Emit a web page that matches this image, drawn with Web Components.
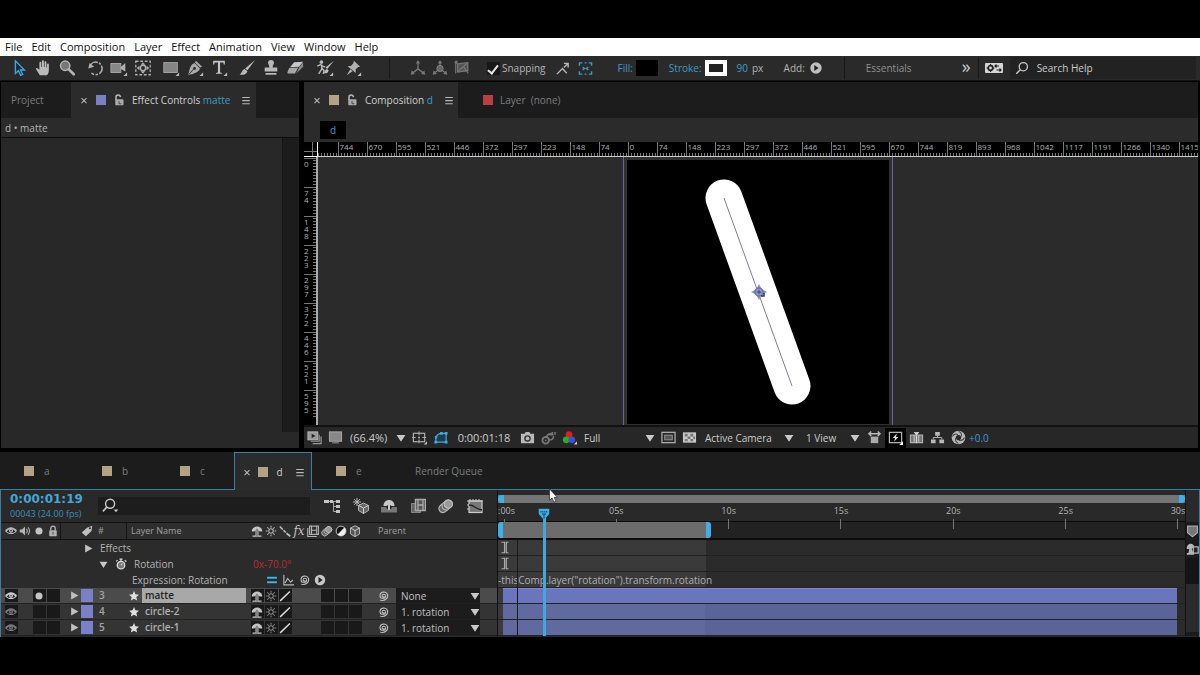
<!DOCTYPE html>
<html lang="en">
<head>
<meta charset="utf-8">
<title>Motion editor</title>
<style>
  html, body { margin: 0; background: #000; }
  body { font: 10px/16px "Open Sans", "Noto Sans", sans-serif; color: #b4b4b4; }
</style>
</head>
<body>
<editor-app></editor-app>
<script>
const define = (name, markup, setup) => {
  const tpl = document.createElement('template');
  tpl.innerHTML = `<style>*,:host{box-sizing:border-box}:host{display:block}
    button{font:inherit;color:inherit;background:none;border:0;padding:0;margin:0;display:inline-flex;align-items:center}
    a{color:inherit;text-decoration:none}</style>` + markup;
  customElements.define(name, class extends HTMLElement {
    constructor() {
      super();
      this.attachShadow({ mode: 'open' }).appendChild(tpl.content.cloneNode(true));
    }
    connectedCallback() {
      if (setup && !this.ready) { this.ready = true; setup(this, this.shadowRoot); }
    }
  });
};

/* ---------- icons ---------- */
const more = '<path d="M19 15v4h-4z" fill="#bbb"/>';
const I = {
  arrow: [20, '<path d="M6 2v14l3.400-3 2.400 5.200 2.300-1-2.400-5H16z" fill="#1b2a33" stroke="#3fa9dd" stroke-width="1.500"/>'],
  hand: [20, '<path d="M6.500 18 3 12.500C1.800 10.500 2 9.500 3.400 10L6 12V4.300c0-1.700 2-1.700 2.100 0V9h.7V2.800c0-1.700 2.200-1.700 2.200 0V9h.7V3.800c0-1.600 2.100-1.600 2.100 0v5.700h.7V6c0-1.500 2-1.400 2 0v7c0 3-2 5-2.500 5z" fill="#bababa"/>'],
  zoom: [20, '<circle cx="8" cy="7.500" r="5.200" fill="#777" stroke="#b5b5b5" stroke-width="1.600"/><path d="m12 11.500 5.500 5.500" stroke="#b5b5b5" stroke-width="3" stroke-linecap="round"/>'],
  rotate: [20, '<path d="M4.500 7.500A7 7 0 1 1 6 15.500" fill="none" stroke="#b0b0b0" stroke-width="1.700" stroke-dasharray="10 1.500 2.500 1.500"/><path d="M2.500 10.500 4 4.500l5 4z" fill="#b0b0b0"/>'],
  camera: [20, '<rect x="1" y="5" width="11" height="10" fill="#888" stroke="#aaa"/><path d="m12 9 5-4.500v9.500L12 11z" fill="#b0b0b0"/>' + more],
  pan: [20, '<rect x="2" y="2.500" width="16" height="15" fill="none" stroke="#b0b0b0" stroke-width="1.400" stroke-dasharray="3 2"/><circle cx="10" cy="10" r="3" fill="none" stroke="#b0b0b0" stroke-width="1.700"/><path d="m10 3.500 2.500 3h-5zm0 13 2.500-3h-5zM3 10l3-2.500v5zm14 0-3-2.500v5z" fill="#b0b0b0"/>'],
  rect: [20, '<rect x="2" y="4" width="15" height="11" fill="#858585" stroke="#a8a8a8"/>' + more],
  pen: [20, '<path d="m11 2 7 6.500-2.500 1-5.500-5.500zM9.500 4.500l6 6c-1 4-6 5.500-13 7.500C4 11 5 6 9.500 4.500z" fill="#aaa"/><path d="m3 17.500 6-7" stroke="#2a2a2a"/><circle cx="9.500" cy="10.500" r="1.500" fill="#2a2a2a"/>' + more],
  type: [20, '<path d="M3.500 2h13v4h-1.200l-.5-2.200h-3.600V15l2.200.5v1h-6.800v-1l2.200-.5V3.800H5.200L4.700 6H3.500z" fill="#c4c4c4"/>' + more],
  brush: [20, '<path d="m19 1-8.500 11.500-2.500-2z" fill="#c0c0c0"/><path d="M7.500 11 10.500 13.500C9 17.500 6 18 1.500 17.200c2.500-.5 3-5.700 6-6.200z" fill="#b8b8b8"/>'],
  stamp: [20, '<path d="M10 1a3.300 3.300 0 0 1 3.300 3.300c0 2-1.500 2.500-1.500 5.200H17v4.500H3V9.500h5.200c0-2.700-1.500-3.200-1.500-5.200A3.300 3.300 0 0 1 10 1zM4 15.500h12v2H4z" fill="#b8b8b8"/>'],
  eraser: [20, '<path d="m9 3.500 10-.5-4.500 5.500-10 .7z" fill="#c8c8c8"/><path d="m3.500 10 10-.5-3.500 6.500H2l-.5-1z" fill="#a5a5a5"/><path d="M14.500 9.500 19 4v4.500L11.500 16z" fill="#8a8a8a"/>'],
  roto: [20, '<circle cx="6" cy="3.500" r="2" fill="#b8b8b8"/><path d="M5.500 6 1.500 8M6 6l.5 5-3.500 5.500M6.500 10l2.500 3-1 3.500M6 7l4 2" stroke="#b8b8b8" stroke-width="1.600" fill="none"/><path d="m20 2-7.500 9-2-1.500zM12 11l2 1.500c-.8 3.500-3 4-6 3 2-.5 2-4 4-4.500z" fill="#c0c0c0"/>' + more],
  pin: [20, '<path d="M11 2 18 8.500l-2.200.3-2.800 2.700v4L4 8l4-.5 2.500-3zM7 11.500l2.500 2L3 18z" fill="#b0b0b0"/>' + more],
  axis1: [20, '<path d="M10 11V3M10 11l-6.500 5M10 11l6.500 5" stroke="#777" stroke-width="1.500"/><path d="m10 1 2.500 4h-5zM2 17.500l1-5 3.500 4.200zm16 0-1-5-3.500 4.200z" fill="#777"/>'],
  axis2: [20, '<path d="M10 8V3M7 13l-4 3M13 13l4 3" stroke="#777" stroke-width="1.500"/><circle cx="10" cy="10.500" r="3.500" fill="#666" stroke="#888"/><path d="m10 1 2.500 4h-5zM2 17.500l1-5 3.500 4.200zm16 0-1-5-3.500 4.200z" fill="#777"/>'],
  axis3: [20, '<path d="M5 5.500 16.500 4v9L5 14.500z" fill="#555" stroke="#777" stroke-width="1.300"/><path d="M5 14 16 4.500M3 2v14M12 9l5 7" stroke="#777" stroke-width="1.300" fill="none"/><path d="m1 4 4-2.500V6z" fill="#777"/>'],
  snap1: [16, '<path d="m2 14 6-6 4.500 5M9.500 7 14 2.500M9.500 2.500H14V7" fill="none" stroke="#b8b8b8" stroke-width="1.500"/>'],
  snap2: [16, '<path d="M1.500 5V2h3M11.500 2h3v3M14.500 11v3h-3M4.500 14h-3v-3M5 6.500 7 8 5 9.500M11 6.500 9 8l2 1.500M7 2h2M7 14h2" fill="none" stroke="#3a9ccb" stroke-width="1.500"/>'],
  play: [16, '<circle cx="8" cy="8" r="6.500" fill="#c0c0c0"/><path d="m6 4.500 5 3.500-5 3.500z" fill="#222"/>'],
  sync: [20, '<rect x="1" y="5" width="18" height="10" rx="1" fill="#d5d5d5"/><circle cx="6.500" cy="10" r="2.300" fill="none" stroke="#222" stroke-width="1.700"/><path d="M6.500 6v1.500M6.500 12.500V14M2.500 10H4M9 10h1.500M15 8h-4M12.500 6.500 11 8l1.500 1.500M12.500 12H17M15.500 10.500 17 12l-1.500 1.500" stroke="#222" stroke-width="1.200" fill="none"/>'],
  search: [16, '<circle cx="9.500" cy="6.500" r="4.700" fill="none" stroke="#c8c8c8" stroke-width="1.500"/><path d="M6 10 1.500 14.500" stroke="#c8c8c8" stroke-width="1.700"/>'],
  searchd: [20, '<circle cx="9" cy="7.500" r="5" fill="none" stroke="#c8c8c8" stroke-width="1.600"/><path d="M5.500 11 1 16" stroke="#c8c8c8" stroke-width="1.800"/><path d="M13 14h5l-2.500 3z" fill="#c8c8c8"/>'],
  unlock: [16, '<rect x="3" y="7" width="11" height="8" rx="1" fill="#aaa"/><path d="M4 8V4.500a3 3 0 0 1 6-.3" fill="none" stroke="#b8b8b8" stroke-width="2"/><path d="M8 9.500V13h3" stroke="#2a2a2a" fill="none"/>'],
  lock: [16, '<rect x="3" y="7" width="10" height="8" rx="1" fill="#b5b5b5"/><path d="M5 7V4.500a3 3 0 0 1 6 0V7" fill="none" stroke="#b5b5b5" stroke-width="1.700"/><path d="M8 9v4" stroke="#222"/>'],
  close: [16, '<path d="m4 5 8 8M12 5l-8 8" stroke="#b8b8b8" stroke-width="1.700"/>'],
  menu: [16, '<path d="M2 4h12M2 9h12M2 14h12" stroke="#b8b8b8" stroke-width="1.700"/>'],
  eye: [16, '<path d="M0 8c4-6.500 12-6.500 16 0-4 5.500-12 5.500-16 0z" fill="currentColor"/><path d="M2.500 8.500c3-4 8-4 11 0-3 3-8 3-11 0z" fill="#222"/><circle cx="8" cy="7.800" r="2.700" fill="currentColor"/><circle cx="8" cy="7.500" r="1" fill="#222"/>'],
  speaker: [16, '<path d="M1 6h3l4-4v12l-4-4H1z" fill="#b5b5b5"/><path d="M10 5q2 3 0 6M12 3q4 5 0 10" fill="none" stroke="#b5b5b5" stroke-width="1.400"/>'],
  dot: [16, '<circle cx="8" cy="8" r="4.700" fill="#c4c4c4"/>'],
  tag: [16, '<path d="M8 3.500 15 1l-1 7-7.500 7L1 10z" fill="#c0c0c0"/><circle cx="11.800" cy="4.300" r="1.300" fill="#222"/>'],
  shy: [16, '<path d="M1 8.500C1 0 15 0 15 8.500h-3.500L10 7v7h4v1.500H2V14h4V7L4.500 8.500z" fill="#c4c4c4"/><path d="M8 5v10" stroke="#222"/>'],
  sun: [16, '<circle cx="8" cy="8" r="3" fill="none" stroke="currentColor" stroke-width="1.400"/><path d="M8 1v2.500M8 12.500V15M1 8h2.500M12.500 8H15M3 3l2 2M11 11l2 2M13 3l-2 2M5 11l-2 2" stroke="currentColor" stroke-width="1.400"/>'],
  quality: [16, '<path d="m1 2 4 4M6 7l3 3M10 11l5 4" stroke="#c0c0c0" stroke-width="2.200"/>'],
  slash: [16, '<path d="M1.500 14.500 14.500 2" stroke="#ddd" stroke-width="2"/>'],
  film: [16, '<rect x="3.500" y="1.500" width="12" height="11" fill="none" stroke="#b5b5b5" stroke-width="1.500"/><path d="M6 1v12M13 1v12M6 7h7M1 4v11.500h12" fill="none" stroke="#b5b5b5" stroke-width="1.500"/>'],
  blur: [16, '<g transform="rotate(-40 8 8)"><rect x="0" y="4" width="15" height="8" rx="4" fill="#666" stroke="#b5b5b5" stroke-width="1.200"/><path d="M6 4.500q-4 3.500 0 7M9 4.500q-4 3.500 0 7" stroke="#bbb" fill="none"/><circle cx="11" cy="8" r="4" fill="#999" stroke="#bbb" stroke-width="1.200"/></g>'],
  adjust: [16, '<circle cx="8" cy="8" r="6.500" fill="#111" stroke="#eee"/><path d="M12.600 3.400A6.500 6.500 0 0 1 3.400 12.600z" fill="#eee"/>'],
  cube: [16, '<path d="m8 1 6 3v8l-6 3.500L2 12V4z" fill="#555" stroke="#b5b5b5" stroke-width="1.300"/><path d="m2 4 6 3.500L14 4M8 7.500v8" fill="none" stroke="#ccc" stroke-width="1.300"/>'],
  star: [16, '<path d="m8 0 2.300 5.300 5.700.5-4.300 3.700 1.300 5.700L8 12.200l-5 3 1.300-5.700L0 5.800l5.700-.5z" fill="#e0e0e0"/>'],
  tri: [16, '<path d="m2 1 13 7-13 7z" fill="#c0c0c0"/>'],
  trid: [16, '<path d="m1 3 7 11 7-11z" fill="#c8c8c8"/>'],
  watch: [16, '<circle cx="8" cy="9.500" r="5" fill="#777" stroke="#ddd" stroke-width="1.700"/><path d="M6 1.500h4M8 2v3M13 3l2 2M1.500 4.500 3.500 3M8 9.500l2-2" stroke="#ddd" stroke-width="1.600"/>'],
  eq: [16, '<path d="M1.500 5h13M1.500 11h13" stroke="#3fb0e6" stroke-width="2.600"/>'],
  graph: [16, '<path d="M2.500 1v13.500H16M4 12 7.500 6l4 5 3-3" fill="none" stroke="#b8b8b8" stroke-width="1.500"/>'],
  whip: [16, '<path d="M9.500 8.500c-.5 1.500-3 .8-2.700-1 .3-2.500 4.700-2.300 4.700.5 0 4-7.500 4.500-7.500-.5C4 2 12 1 14 6c1.500 5-4 9.500-10 7.500" fill="none" stroke="#c0c0c0" stroke-width="1.400"/>'],
  flow: [16, '<rect x="0" y="2" width="5" height="3" fill="#c5c5c5"/><rect x="6" y="2" width="3" height="3" fill="#c5c5c5"/><rect x="12" y="2" width="4" height="3" fill="#c5c5c5"/><rect x="12" y="7" width="4" height="3" fill="#c5c5c5"/><rect x="12" y="12" width="4" height="3" fill="#c5c5c5"/><path d="M4 3.500h8M9.500 4v9.500H12M9.500 8.500H12" fill="none" stroke="#c5c5c5" stroke-width=".8"/>'],
  draft: [16, '<path d="m10.500 5 5 2.500v5l-5 3-5-3v-5z" fill="#666" stroke="#b5b5b5"/><path d="m5.500 7.500 5 2.500 5-2.500M10.500 10v5.500" fill="none" stroke="#ccc"/><path d="M4 0v8M0 4h8M1.200 1.200l5.600 5.600M6.800 1.200 1.200 6.800" stroke="#bbb"/>'],
  shyall: [16, '<path d="M0 9h5l1 2h4l1-2h5v5.500H0z" fill="#777"/><path d="M2.500 8c0-8 11-8 11 0h-3L9 7v5H7V7L5.500 8z" fill="#c8c8c8"/>'],
  frames: [16, '<path d="M1.500 5.500h9v9h-9z" fill="#666" stroke="#888"/><path d="M5.500 1.500h10v11h-10z" fill="#555" stroke="#aaa" stroke-width="1.400"/><path d="M8 1.500v11M13 1.500v11M8 7h5" stroke="#aaa" stroke-width="1.300"/>'],
  gedit: [16, '<rect x="2" y="3" width="13" height="11.500" fill="#777" stroke="#ccc" stroke-width="1.200"/><path d="M0 3h16M3 1v2M6 1v2M9 1v2M12 1v2M0 7h2M0 11h2" stroke="#ccc"/><path d="M2 7c6 0 6 4 13 5" stroke="#222" fill="none" stroke-width="1.300"/>'],
  preview: [16, '<rect x="1" y="2" width="10.500" height="8.500" fill="#999" stroke="#bbb"/><path d="m5 4 4 2.300L5 8.500z" fill="#222"/><path d="M13 5v7H4M15 7v7.500H6" fill="none" stroke="#999" stroke-width="1.300"/>'],
  monitor: [16, '<rect x="1.500" y="2" width="13" height="10" fill="#888" stroke="#aaa"/><path d="M5 12.500h6l1 2H4z" fill="#777"/>'],
  grid: [16, '<rect x="1.500" y="3.500" width="12" height="9" fill="none" stroke="#aaa" stroke-width="1.300"/><path d="M7.500 1.500v4M7.500 10v4M0 8h4M11 8h4M7.500 7v2M6.500 8h2" stroke="#aaa" stroke-width="1.200"/><path d="M16 12v3.500h-3.500z" fill="#bbb"/>'],
  mask: [16, '<path d="M3 13V9q.5-5 6-5.500h5V13z" fill="#1d3d50" stroke="#3fa9dd" stroke-width="1.300"/><path d="M1.500 11.500h3v3h-3zM7.500 2h3v3h-3zM12.500 2h3v3h-3zM12.500 11.500h3v3h-3zM2 6.500h2.500V9H2z" fill="#3fa9dd"/>'],
  photo: [16, '<path d="M1 4h4l1-2h4l1 2h4v10H1z" fill="#b8b8b8"/><circle cx="8" cy="9" r="3.500" fill="#333"/><circle cx="8" cy="9" r="2" fill="#b8b8b8"/>'],
  snapshow: [16, '<circle cx="5" cy="11" r="3.500" fill="none" stroke="#777" stroke-width="2"/><circle cx="5" cy="11" r="1" fill="#777"/><path d="M6 7.500c1-3 3-4 6-3V2M9 5h4.500M15 2v3M8 10c3 1 5 0 5.500-3.500" stroke="#777" stroke-width="1.700" fill="none"/>'],
  rgb: [16, '<circle cx="7.500" cy="5" r="3.600" fill="#e31b1b"/><circle cx="4.500" cy="10.500" r="3.600" fill="#23b123"/><circle cx="10.500" cy="10.500" r="3.600" fill="#3a4fd8"/><path d="M16 12v3.500h-3.500z" fill="#ccc"/>'],
  roi: [16, '<rect x="1" y="2.500" width="14" height="11" fill="none" stroke="#aaa" stroke-width="1.400"/><rect x="4" y="5.500" width="8" height="5" fill="#555" stroke="#999"/>'],
  checker: [16, '<rect x="1" y="2.500" width="14" height="11" fill="#c8c8c8"/><path d="M3 4h3v3H3zM9 4h3v3H9zM6 7h3v2.500H6zM12 7h2v2.500h-2zM3 9.500h3V12H3zM9 9.500h3V12H9z" fill="#777"/>'],
  par: [16, '<path d="M2 4h12M4.500 1.500 2 4l2.500 2.500M11.500 1.500 14 4l-2.500 2.500" fill="none" stroke="#b8b8b8" stroke-width="1.500"/><path d="M4 7h8v7H4z" fill="#aaa"/>'],
  fast: [16, '<rect x="1.500" y="2.500" width="13" height="11" fill="none" stroke="#b8b8b8" stroke-width="1.300"/><path d="M9.500 3.500 5 8.500h2.500l-1 4 4.500-5H8.500z" fill="#ddd"/><path d="M16 12v4h-4z" fill="#fff"/>'],
  tline: [16, '<path d="M1.500 5.500h4v8h-4zM6 5.500h4v8H6zM10.500 5.500h4v8h-4z" fill="#777" stroke="#b0b0b0" stroke-width="1.200"/><path d="M5 2h6L8 6.500z" fill="#ccc"/><path d="M8 6v8" stroke="#ddd"/>'],
  chart: [16, '<path d="M5.500 2h5v4h-5zM1 10h5v4H1zM10 10h5v4h-5z" fill="#b8b8b8"/><path d="M8 6v2M3.500 10V8h9v2" stroke="#b8b8b8" fill="none"/>'],
  iris: [16, '<circle cx="8" cy="8" r="7.300" fill="#b8b8b8"/><circle cx="8" cy="8" r="2.800" fill="#2a2a2a"/><path d="M8 1.500q4 1 3 5.500M14.500 8q-2 4-6 3M8 14.500q-4-2-3-6M1.500 7q2-4 6-2" fill="none" stroke="#444" stroke-width="1.100"/>'],
  shield: [16, '<path d="M2 2h12v8l-6 5-6-5z" fill="#777" stroke="#aaa" stroke-width="1.500"/>'],
  bin: [16, '<path d="M1 8C0 1 9-1 10 5l-3 3 2 5h1v2H1v-2h2l1-5z" fill="#b5b5b5"/><path d="M9 5.500h6V13H9z" fill="#222" stroke="#b5b5b5" stroke-width="1.500"/>'],
  ibeam: [16, '<path d="M4 2h3.500v12H4M12 2H9.500v12H12" fill="none" stroke="#aaa" stroke-width="1.400"/>'],
  cursor: [16, '<path d="M4 0v13l3-2.800L9 15l2.300-1-2-4.500H13z" fill="#fff" stroke="#222" stroke-width=".8"/>'],
  play2: [16, '<circle cx="8" cy="8" r="7" fill="#c8c8c8"/><path d="m6 4 5.500 4L6 12z" fill="#222"/>'],
  head: [16, '<path d="M1 1h14v7l-7 8-7-8z" fill="#3fb0e6"/><path d="M4 4v2M6.500 4v2M9 4v2M11.500 4v2M5.500 8h5M8 8v6" stroke="#0c3a52" stroke-width="1.200"/>']
};
define('ae-icon', `<style>:host{display:block;flex:none;width:16px;height:16px}svg{display:block;width:100%;height:100%}</style>`, (el, root) => {
  const [s, art] = I[el.getAttribute('name')];
  root.innerHTML += `<svg viewBox="0 0 ${s} ${s}" aria-hidden="true">${art}</svg>`;
});

/* ---------- drop-down list ---------- */
define('ae-select', `<style>
  :host{position:relative;height:16px}
  select{appearance:none;display:block;width:100%;height:100%;border:0;padding:0 16px 0 0;margin:0;background:transparent;color:inherit;font:inherit;line-height:16px}
  ae-icon{position:absolute;right:0;top:3px;width:10px;height:10px;pointer-events:none}
</style><select></select><ae-icon name="trid"></ae-icon>`, (el, root) => {
  const sel = root.querySelector('select');
  sel.setAttribute('aria-label', el.getAttribute('label'));
  sel.add(new Option(el.getAttribute('value')));
});

/* ---------- menu ---------- */
define('menu-bar', `<style>
  :host{background:#fff;color:#111}
  nav{display:flex;gap:9px;padding:0 5px;font:11px/18px "Open Sans","Noto Sans",sans-serif}
</style><nav></nav>`, (el, root) => {
  root.querySelector('nav').innerHTML = 'File Edit Composition Layer Effect Animation View Window Help'
    .split(' ').map(t => `<a href="#${t.toLowerCase()}">${t}</a>`).join('');
});

/* ---------- tools ---------- */
define('tool-bar', `<style>
  :host{background:#2a2a2a;border-bottom:1px solid #111}
  .bar{display:flex;align-items:center;height:24px;padding-left:7px}
  .group{display:flex;margin-right:4px}
  .group button{width:24px;height:24px;justify-content:center}
  .group ae-icon{width:18px;height:18px}
  .wide button{width:28px}
  .axes{margin:0 8px 0 17px}.axes button{width:22px}
  i{width:1px;height:22px;background:#181818}
  label{display:flex;align-items:center;gap:2px}
  input[type=checkbox]{appearance:none;width:13px;height:13px;margin:0 0 0 6px;background:#181818;display:grid;place-items:center}
  input[type=checkbox]:checked::before{content:"";width:4px;height:9px;border:solid #e8e8e8;border-width:0 2px 2px 0;transform:rotate(38deg)}
  .snap{display:flex;gap:8px;margin-left:10px}
  .snap ae-icon{width:15px;height:15px}
  .blue{color:#3f9cc9}
  .sw{width:22px;height:16px;background:#000;margin-left:3px}
  .st{border:4px solid #fff;background:#222}
  .fill{margin-left:24px}.stroke{margin-left:11px}
  .px{margin-left:10px;width:48px;display:flex;gap:4px}
  .add{gap:4px;margin-right:21px}
  .add ae-icon{width:14px;height:14px}
  .ws{display:flex;justify-content:space-between;align-items:center;flex:1 1 135px;padding:0 7px 0 21px;color:#909090}
  .chev{font:18px/20px "Open Sans",sans-serif;color:#c8c8c8;padding-bottom:4px}
  .sync{margin:0 6px 0 5px}.sync ae-icon{width:20px;height:20px}
  .find{display:flex;align-items:center;flex:1 1 190px;background:#222;height:22px;padding-left:5px;margin-right:4px;gap:8px}
  .find ae-icon{width:14px;height:14px}
  .find input{flex:1;min-width:0;border:0;background:none;font:inherit;color:#ccc;padding:0}
  .find input::placeholder{color:#ccc;opacity:1}
</style><div class="bar" role="toolbar"></div>`, (el, root) => {
  const g = (names, cls = '') => `<div class="group ${cls}">` + names.split(' ').map(n =>
    `<button aria-label="${n}"><ae-icon name="${n}"></ae-icon></button>`).join('') + '</div>';
  root.querySelector('.bar').innerHTML = g('arrow hand zoom') + g('rotate camera pan') + g('rect pen type')
    + g('brush stamp eraser') + g('roto pin', 'wide') + '<i style="margin-left:18px"></i>' + g('axis1 axis2 axis3', 'axes')
    + `<label><input type="checkbox" checked>Snapping</label>
    <div class="snap"><ae-icon name="snap1"></ae-icon><ae-icon name="snap2"></ae-icon></div>
    <button class="blue fill">Fill:<span class="sw"></span></button>
    <button class="blue stroke">Stroke:<span class="sw st"></span></button>
    <div class="px"><span class="blue">90</span><span>px</span></div>
    <button class="add">Add:<ae-icon name="play"></ae-icon></button><i></i>
    <div class="ws"><button>Essentials</button><button class="chev" aria-label="More workspaces">»</button></div><i></i>
    <button class="sync" aria-label="Sync settings"><ae-icon name="sync"></ae-icon></button>
    <label class="find"><ae-icon name="search"></ae-icon><input type="search" placeholder="Search Help" aria-label="Search Help"></label>`;
});

/* ---------- panel tab ---------- */
define('panel-tab', `<style>
  :host{display:flex;align-items:center;height:36px;gap:7px;padding:0 10px;color:#7c7c7c}
  :host([active]){background:#2b2b2b;color:#d0d0d0}
  .sw{width:10px;height:10px;flex:none}
  ae-icon{width:10px;height:10px}
  ae-icon.lock{width:12px;height:12px}
  button{white-space:pre}
  .m{margin-left:4px}
</style>`, (el, root) => {
  const a = n => el.getAttribute(n), has = n => el.hasAttribute(n);
  root.innerHTML += (has('active') ? '<ae-icon name="close"></ae-icon>' : '')
    + (a('swatch') ? `<span class="sw" style="background:${a('swatch')}"></span>` : '')
    + (has('lock') ? '<ae-icon class="lock" name="unlock"></ae-icon>' : '')
    + '<button role="tab"><slot></slot></button>'
    + (has('active') ? '<ae-icon class="m" name="menu"></ae-icon>' : '');
});

/* ---------- effect controls ---------- */
define('effect-panel', `<style>
  :host{display:flex;flex-direction:column;background:#282828}
  .tabs{display:flex;background:#1c1c1c}
  .tabs b{color:#3f9cc9;font-weight:400}
  .proj{width:70px}
  .active{padding:0 8px;width:185px}
  .path{background:#2b2b2b;height:20px;padding:2px 4px;border-bottom:1px solid #0c0c0c}
  .body{flex:1;display:flex;justify-content:flex-end}
  .bar{width:17px;background:#1c1c1c;border-left:1px solid #141414;margin-bottom:16px}
</style>
<div class="tabs"><panel-tab class="proj">Project</panel-tab><panel-tab class="active" active lock swatch="#7a80c4">Effect Controls <b>matte</b></panel-tab></div>
<div class="path">d • matte</div>
<div class="body"><div class="bar"></div></div>`);

/* ---------- rulers ---------- */
define('ae-ruler', `<style>
  :host{display:flex;overflow:hidden;background:#000;color:#b0b0b0;font:8px/8px "Open Sans","Noto Sans",sans-serif}
  span{flex:none;border:0 solid #777}
  :host(:not([vertical])){justify-content:center;height:15px;border-bottom:1px solid #ccc}
  :host(:not([vertical])) span{width:29px;height:14px;border-left-width:1px;padding-top:1px;padding-left:1px;
    background:repeating-linear-gradient(90deg,transparent 0 2px,#777 2px 3px) left bottom/100% 3px no-repeat}
  :host([vertical]){flex-direction:column;width:14px;border-right:2px solid #aaa;padding-top:1px}
  :host([vertical]) span{width:12px;height:29px;border-top-width:1px;padding-top:1px;line-height:7px;padding-right:6px;word-break:break-all;
    background:repeating-linear-gradient(0deg,transparent 0 2px,#777 2px 3px) right top/3px 100% no-repeat}
</style>`, (el, root) => {
  const from = +el.getAttribute('from'), to = +el.getAttribute('to'), lead = +el.getAttribute('lead') || 0;
  let out = '<span></span>'.repeat(lead);
  for (let k = from; k <= to; k++) out += `<span>${Math.floor(Math.abs(k) * 74.48)}</span>`;
  root.innerHTML += out;
});

/* ---------- composition viewer ---------- */
define('comp-viewer', `<style>
  :host{display:flex;flex-direction:column;background:#2b2b2b;min-width:0}
  .tabs{display:flex;background:#1c1c1c}
  .tabs b{color:#3f9cc9;font-weight:400}
  .act{width:154px;padding:0 8px}
  .lay{margin-left:15px}
  .crumb{height:24px;padding:3px 16px 2px 16px}
  .crumb a{display:block;width:26px;background:#000;color:#3f9cc9;text-align:center;line-height:18px}
  .stage{flex:1;min-height:0;display:grid;grid-template:15px minmax(0,1fr) / 14px minmax(0,1fr)}
  .corner{background:linear-gradient(#777,#777) 0 9px/100% 1px no-repeat,linear-gradient(90deg,#777,#777) 8px 0/1px 100% no-repeat,#000;border:solid #fff;border-width:0 1px 1px 0}
  .vert{height:0;min-height:100%}
  .view{display:flex;justify-content:center;overflow:hidden}
  .layer{display:flex;padding:3px 3px 0;border:solid #66669c;border-width:0 1px;background:#303030}
  .canvas{width:262px;height:264px;background:#000;display:block}
  .foot{display:flex;align-items:center;height:23px;border-top:2px solid #111;background:#272727;color:#ccc}
  .foot button{width:21px;height:20px;justify-content:center}
  .foot ae-icon{width:15px;height:15px}
  .foot .on{background:#000}
  .time{width:66px;text-align:center}
  .time,.mag{font-size:11px}
</style>
<div class="tabs"><panel-tab class="act" active lock swatch="#b3a286">Composition <b>d</b></panel-tab><panel-tab class="lay" swatch="#b84040">Layer  (none)</panel-tab></div>
<div class="crumb"><a href="#d">d</a></div>
<div class="stage">
  <div class="corner"></div><ae-ruler lead="1" from="-10" to="19"></ae-ruler>
  <ae-ruler class="vert" vertical from="0" to="8"></ae-ruler>
  <div class="view"><div class="layer"><svg class="canvas" viewBox="0 0 262 264">
    <path d="M97 38 165 226" stroke="#fff" stroke-width="37" stroke-linecap="round"/>
    <path d="M97 38 165 226" stroke="#7a7f95"/>
    <g transform="translate(132 132)"><path d="m0-8 2 4-2 2-2-2zM0 8l2-4-2-2-2 2zM-8 0l4-2 2 2-2 2zM8 0 4-2 2 0l2 2z" fill="#8b90c0"/><circle r="4" fill="#8b95cf" stroke="#6a73b0" stroke-width="1.500"/><path d="M-2 0h4M0-2v4" stroke="#3b4688"/><path d="M2 4h3v-3" stroke="#333" stroke-width="1.500" fill="none"/></g>
  </svg></div></div>
</div>
<div class="foot">
  <button aria-label="Preview"><ae-icon name="preview"></ae-icon></button>
  <button aria-label="Monitor"><ae-icon name="monitor"></ae-icon></button>
  <ae-select class="mag" label="Magnification" value="(66.4%)" style="width:56px;margin:0 3px 0 4px"></ae-select>
  <button aria-label="Grid"><ae-icon name="grid"></ae-icon></button>
  <button aria-label="Mask"><ae-icon name="mask"></ae-icon></button>
  <span class="time">0:00:01:18</span>
  <button aria-label="Take snapshot"><ae-icon name="photo"></ae-icon></button>
  <button aria-label="Show snapshot"><ae-icon name="snapshow"></ae-icon></button>
  <button aria-label="Channels"><ae-icon name="rgb"></ae-icon></button>
  <ae-select label="Resolution" value="Full" style="width:71px;margin:0 3px 0 4px"></ae-select>
  <button aria-label="Region"><ae-icon name="roi"></ae-icon></button>
  <button aria-label="Transparency"><ae-icon name="checker"></ae-icon></button>
  <ae-select label="Camera" value="Active Camera" style="width:89px;margin:0 12px 0 5px"></ae-select>
  <ae-select label="Views" value="1 View" style="width:54px;margin-right:4px"></ae-select>
  <button aria-label="Pixel aspect"><ae-icon name="par"></ae-icon></button>
  <button class="on" aria-label="Fast previews"><ae-icon name="fast"></ae-icon></button>
  <button aria-label="Timeline"><ae-icon name="tline"></ae-icon></button>
  <button aria-label="Flowchart"><ae-icon name="chart"></ae-icon></button>
  <button aria-label="Reset exposure"><ae-icon name="iris"></ae-icon></button>
  <span style="color:#3f9cc9">+0.0</span>
</div>`);

/* ---------- layer row, sharing its columns with the header ---------- */
const columns = `display:grid;grid-template-columns:repeat(4,14px) 8px 12px 14px 32px 16px 104px 4px repeat(8,14px) 14px 14px 6px 84px 1fr;align-items:center;justify-items:center;padding-left:3px;`;
define('layer-row', `<style>
  :host{${columns}height:16px;background:#343434;border-bottom:1px solid #222;color:#888}
  :host([selected]){background:#4b4b4b}
  .eye{color:#777}:host([selected]) .eye{color:#ccc}
  ae-icon{width:12px;height:12px}
  .box{width:13px;height:13px;background:#191919;display:grid;place-items:center}
  .sw{width:12px;height:13px;background:#7a82c6}
  .n,.name{justify-self:stretch;line-height:15px;font-weight:600;color:#a5a5a5}
  .n{padding-left:5px}
  .name{padding-left:3px;color:#b0b0b0}
  :host([selected]) .name{background:#a8a8a8;color:#222}
  .star{width:10px;height:10px}.t{width:9px;height:9px}
  ae-select{justify-self:stretch;background:#1c1c1c;color:#c0c0c0;height:15px;padding:0 5px}
</style>`, (el, root) => {
  const a = n => el.getAttribute(n);
  const box = (n, c = '') => `<span class="box ${c}">${n ? `<ae-icon name="${n}"></ae-icon>` : ''}</span>`;
  root.innerHTML += box('eye', 'eye') + '<span></span>' + box(el.hasAttribute('selected') ? 'dot' : '') + box('') + '<span></span>'
    + `<ae-icon class="t" name="tri"></ae-icon><span class="sw"></span><span class="n">${a('num')}</span>
    <ae-icon class="star" name="star"></ae-icon><span class="name"><slot></slot></span><span></span>`
    + box('shy') + box('sun') + box('slash') + '<span></span><span></span>' + box('') + box('') + box('')
    + `<span></span><ae-icon name="whip"></ae-icon><span></span><ae-select label="Parent" value="${a('parent')}"></ae-select>`;
});

/* ---------- timeline ---------- */
define('timeline-panel', `<style>
  :host{background:#1c1c1c}
  .tabs{display:flex;height:38px;position:relative;color:#777}
  .tabs panel-tab{width:78px;height:37px;padding:0 0 0 24px;gap:10px}
  .tabs panel-tab[active]{height:38px;padding:0 0 0 7px;gap:6px;border:1px solid #3d7d9e;border-bottom:0;position:relative;z-index:1}
  .tabs panel-tab.rq{width:100px;padding-left:25px}
  .wrap{display:flex;border:1px solid #3d7d9e;border-bottom:0;margin-top:-1px;padding-bottom:1px;background:#292929}
  .left{width:497px;flex:none;border-right:1px solid #111}
  .top{display:flex;align-items:center;height:32px;padding-left:9px}
  .tc{width:80px;color:#41a7d8;white-space:nowrap}
  .tc b{display:block;font:bold 12px/16px "DejaVu Sans",sans-serif}
  .tc small{display:block;font-size:9px;line-height:14px;color:#3a8fba}
  .find{width:212px;height:18px;background:#1d1d1d;margin-left:8px;display:flex;align-items:center;padding-left:4px}
  .find ae-icon{width:18px;height:18px}
  .find input{flex:1;min-width:0;border:0;background:none;font:inherit;color:inherit;padding:0}
  .views{display:flex;flex:1;justify-content:space-between;padding:0 14px}
  .head{${columns}height:18px;background:#2e2e2e;border:solid #111;border-width:1px 0;font-size:9px;line-height:16px;color:#a0a0a0}
  .head ae-icon{width:12px;height:12px;color:#b5b5b5}
  .head span{justify-self:start;padding-left:4px;white-space:nowrap}
  .head .bl{border-left:1px solid #151515}
  .prop{display:flex;align-items:center;height:16px;gap:7px;background:#2b2b2b}
  .prop ae-icon{width:9px;height:9px}
  .prop ae-icon.k{width:12px;height:12px}
  .val{color:#b8302f;width:48px}
  .right{flex:1;min-width:0;display:flex}
  .time{flex:1;min-width:0;position:relative;overflow:hidden}
  .side{width:14px;background:#1b1b1b;border-left:1px solid #111}
  .side ae-icon{width:13px;height:18px}
  .nav{display:flex;justify-content:space-between;height:8px;margin:5px 0 0;background:#747474}
  .nav i{width:6px;background:#3fb0e6}
  .nav i:first-child{border-radius:5px 0 0 5px}.nav i:last-child{border-radius:0 5px 5px 0}
  .ticks{display:flex;justify-content:space-between;margin:0 7px 0 6px;height:18px;font-size:9px;line-height:16px}
  .ticks span{width:0;display:flex;flex-direction:column;align-items:center;white-space:nowrap}
  .ticks span::after{content:"";width:1px;height:10px;background:#777;flex:none;position:relative;z-index:1}
  .work{background:#222;border:solid #0c0c0c;border-width:1px 0 2px;height:19px}
  .work div{width:31%;height:16px;background:#6c6c6c;border:solid #3fb0e6;border-width:0 5px;border-radius:3px;position:relative;z-index:1}
  .track{height:16px;border-bottom:1px solid #222;background:linear-gradient(#3a3a3a,#3a3a3a) 0 0/30.300% 100% no-repeat #2b2b2b;white-space:nowrap;color:#b0b0b0}
  .track ae-icon{width:14px;height:15px}
  .bar{margin:0 8px 0 5px;height:15px;background:linear-gradient(90deg,#606a9e 30%,#5a6498 30%)}
  .bar.sel{background:linear-gradient(#8088d0 0 1px,#6b75be 1px)}
  .ph{position:absolute;left:6.700%;top:17px;bottom:0;width:12px;margin-left:-6px;z-index:2;background:linear-gradient(#3fa9dd,#3fa9dd) 5px 8px/3px 100% no-repeat}
  .ph ae-icon{width:12px;height:14px}
  .last{position:absolute;left:2.800%;top:49px;bottom:0;width:1px;background:#1a1a1a}
  .cursor{position:absolute;left:546px;top:37px;width:14px;height:14px;z-index:3}
</style>
<div class="tabs" role="tablist">
  <panel-tab swatch="#b3a286">a</panel-tab><panel-tab swatch="#b3a286">b</panel-tab><panel-tab swatch="#b3a286">c</panel-tab>
  <panel-tab active swatch="#b3a286"> d </panel-tab><panel-tab swatch="#b3a286">e</panel-tab><panel-tab class="rq">Render Queue</panel-tab>
  <ae-icon class="cursor" name="cursor"></ae-icon>
</div>
<div class="wrap">
  <div class="left">
    <div class="top">
      <div class="tc"><b>0:00:01:19</b><small>00043 (24.00 fps)</small></div>
      <label class="find"><ae-icon name="searchd"></ae-icon><input type="search" aria-label="Search layers"></label>
      <div class="views"></div>
    </div>
    <div class="head">
      <ae-icon name="eye"></ae-icon><ae-icon name="speaker"></ae-icon><ae-icon name="dot"></ae-icon><ae-icon name="lock"></ae-icon>
      <span class="bl">&nbsp;</span><i></i><ae-icon name="tag"></ae-icon><span>#</span><span class="bl">Layer Name</span><i></i><i></i>
      <ae-icon name="shy"></ae-icon><ae-icon name="sun"></ae-icon><ae-icon name="quality"></ae-icon><em style="font:italic 12px/14px 'DejaVu Serif',serif;color:#c0c0c0">fx</em>
      <ae-icon name="film"></ae-icon><ae-icon name="blur"></ae-icon><ae-icon name="adjust"></ae-icon><ae-icon name="cube"></ae-icon>
      <i></i><span style="padding-left:2px">Parent</span>
    </div>
    <div class="prop" style="padding-left:83px"><ae-icon name="tri"></ae-icon>Effects</div>
    <div class="prop" style="padding-left:98px"><ae-icon name="trid"></ae-icon><ae-icon class="k" name="watch"></ae-icon><span style="width:112px">Rotation</span><span class="val">0x-70.0°</span></div>
    <div class="prop" style="padding-left:131px;gap:4px"><span style="width:130px">Expression: Rotation</span>
      <ae-icon class="k" name="eq"></ae-icon><ae-icon class="k" name="graph"></ae-icon><ae-icon class="k" name="whip"></ae-icon><ae-icon class="k" name="play2"></ae-icon></div>
    <layer-row selected num="3" parent="None">matte</layer-row>
    <layer-row num="4" parent="1. rotation">circle-2</layer-row>
    <layer-row num="5" parent="1. rotation">circle-1</layer-row>
  </div>
  <div class="right">
    <div class="time">
      <div class="nav"><i></i><i></i></div>
      <div class="ticks"><span>0:00s</span><span>05s</span><span>10s</span><span>15s</span><span>20s</span><span>25s</span><span>30s</span></div>
      <div class="work"><div></div></div>
      <div class="track"><ae-icon name="ibeam"></ae-icon></div>
      <div class="track"><ae-icon name="ibeam"></ae-icon></div>
      <div class="track">-thisComp.layer("rotation").transform.rotation</div>
      <div class="track"><div class="bar sel"></div></div>
      <div class="track"><div class="bar"></div></div>
      <div class="track"><div class="bar"></div></div>
      <div class="last"></div>
      <div class="ph"><ae-icon name="head"></ae-icon></div>
    </div>
    <div class="side"><div style="height:32px;background:#292929"></div><ae-icon name="shield"></ae-icon><ae-icon name="bin"></ae-icon><div style="height:26px;background:#151515"></div><div style="height:48px;background:#2b2b2b"></div></div>
  </div>
</div>`, (el, root) => {
  root.querySelector('.views').innerHTML = 'flow draft shyall frames blur gedit'.split(' ')
    .map(n => `<button aria-label="${n}"><ae-icon name="${n}"></ae-icon></button>`).join('');
});

/* ---------- whole window ---------- */
define('editor-app', `<style>
  :host{display:flex;flex-direction:column;min-height:100vh;padding:38px 0;background:#000}
  .panels{flex:1;display:grid;grid-template-columns:298px minmax(0,1fr);gap:5px;padding:1px 2px 0 1px;margin-bottom:4px}
</style>
<menu-bar></menu-bar><tool-bar></tool-bar>
<div class="panels"><effect-panel></effect-panel><comp-viewer></comp-viewer></div>
<timeline-panel></timeline-panel>`);
</script>
</body>
</html>
